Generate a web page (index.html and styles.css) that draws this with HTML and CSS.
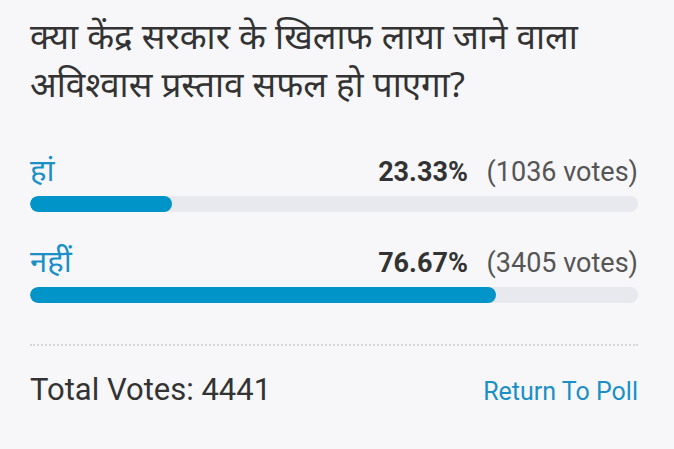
FILE: index.html
```html
<!DOCTYPE html>
<html lang="hi">
<head>
<meta charset="UTF-8" />
<title>Poll Results</title>
<meta name="viewport" content="width=device-width, initial-scale=1.0">
<link rel="stylesheet" href="styles.css">
</head>
<body>

  <div class="poll">
    <h2 class="poll-question">क्या केंद्र सरकार के खिलाफ लाया जाने वाला अविश्वास प्रस्ताव सफल हो पाएगा?</h2>

    <div class="poll-answers">
      <div class="answer">
        <div class="answer-head">
          <span class="answer-label">हां</span>
          <span class="answer-result"><b>23.33%</b> (1036 votes)</span>
        </div>
        <div class="bar"><div class="bar-fill" style="width:23.33%"></div></div>
      </div>

      <div class="answer">
        <div class="answer-head">
          <span class="answer-label">नहीं</span>
          <span class="answer-result"><b>76.67%</b> (3405 votes)</span>
        </div>
        <div class="bar"><div class="bar-fill" style="width:76.67%"></div></div>
      </div>
    </div>

    <div class="poll-footer">
      <span class="total">Total Votes: 4441</span>
      <a class="return-link" href="#">Return To Poll</a>
    </div>
  </div>

</body>
</html>
```

FILE: styles.css
```css
body {
  margin: 0;
  padding: 0;
  background-color: #f7f7f9;
  font-family: Roboto, "Noto Sans", Arial, sans-serif;
  color: #333;
}
.poll {
  padding: 12px 36px 20px 30px;
}
.poll-question {
  margin: 0;
  font-family: "Noto Sans", "Liberation Sans", sans-serif;
  font-size: 35px;
  font-weight: normal;
  line-height: 48px;
  color: #333;
}
.poll-answers {
  margin-top: 41px;
}
.answer {
  margin-bottom: 28px;
}
.answer-head {
  display: flex;
  justify-content: space-between;
  align-items: baseline;
  height: 47px;
}
.answer-label {
  font-family: "Noto Sans", sans-serif;
  font-size: 31px;
  line-height: 40px;
  color: #1a90c6;
}
.answer-result {
  font-size: 27px;
  color: #555;
}
.answer-result b {
  color: #333;
  font-weight: 700;
  margin-right: 12px;
}
.bar {
  height: 16px;
  background-color: #e8e8ef;
  border-radius: 8px;
  overflow: hidden;
}
.bar-fill {
  height: 100%;
  background-color: #0094c9;
  border-radius: 8px;
}
.poll-footer {
  border-top: 2px dotted #d6d6d6;
  margin-top: 41px;
  padding-top: 25px;
  display: flex;
  justify-content: space-between;
  align-items: baseline;
}
.total {
  font-size: 31px;
  color: #333;
}
.return-link {
  font-size: 25px;
  color: #1a90c6;
  text-decoration: none;
}
```
